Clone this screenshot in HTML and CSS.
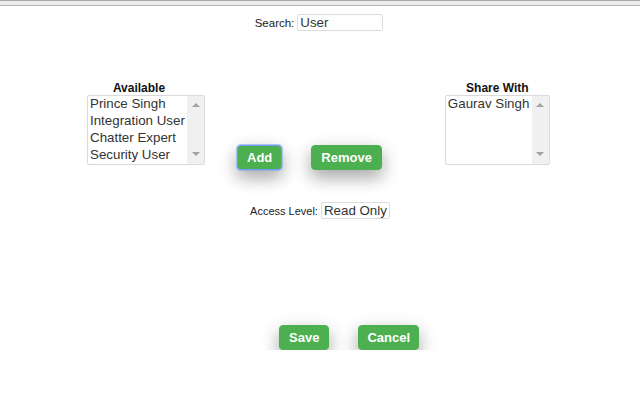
FILE: index.html
```html
<!DOCTYPE html>
<html>
<head>
<meta charset="utf-8">
<link rel="stylesheet" href="styles.css">
</head>
<body>
<div class="topbar"></div>

<div class="search-row">
  <span class="label">Search:</span>
  <div class="field search-field">User</div>
</div>

<div class="share-row">
  <div class="col col-available">
    <div class="col-title">Available</div>
    <div class="listbox">
      <div class="items">
        <div class="item">Prince Singh</div>
        <div class="item">Integration User</div>
        <div class="item">Chatter Expert</div>
        <div class="item">Security User</div>
      </div>
      <div class="scrollbar"><span class="arrow-up"></span><span class="arrow-down"></span></div>
    </div>
  </div>

  <div class="actions">
    <button class="btn btn-focus">Add</button>
    <button class="btn">Remove</button>
  </div>

  <div class="col col-share">
    <div class="col-title">Share With</div>
    <div class="listbox">
      <div class="items">
        <div class="item">Gaurav Singh</div>
      </div>
      <div class="scrollbar"><span class="arrow-up"></span><span class="arrow-down"></span></div>
    </div>
  </div>
</div>

<div class="access-row">
  <span class="label">Access Level:</span>
  <div class="field access-field">Read Only</div>
</div>

<div class="footer-actions">
  <button class="btn">Save</button>
  <button class="btn btn-cancel">Cancel</button>
</div>
</body>
</html>
```

FILE: styles.css
```css
* { box-sizing: border-box; }

body {
  margin: 0;
  background: #fff;
  font-family: "Liberation Sans", Arial, sans-serif;
  color: #222;
}

.topbar {
  height: 6px;
  border-top: 1px solid #a8a8a8;
  border-bottom: 1px solid #b4b4b4;
  background: #ededed;
}

.search-row,
.access-row {
  display: flex;
  justify-content: center;
  align-items: center;
  gap: 3px;
}

.search-row { margin-top: 8px; padding-right: 2px; }

.label {
  font-size: 11px;
  color: #222;
}

.search-row .label { font-size: 11.5px; }

.field {
  height: 17px;
  border: 1px solid #dcdcdc;
  border-radius: 2px;
  font-size: 13.33px;
  line-height: 15px;
  padding: 0 2px;
  color: #333;
  text-align: left;
}

.search-field { width: 86px; }
.access-field { width: 69px; }

.share-row {
  display: flex;
  align-items: flex-start;
  margin-top: 51px;
  padding-left: 87px;
}

.col-title {
  font-size: 12px;
  font-weight: bold;
  line-height: 13px;
  text-align: center;
  color: #111;
}

.col-available { width: 118px; }
.col-available .col-title { padding-right: 14px; }

.col-share { width: 105px; margin-left: 63px; }

.listbox {
  display: flex;
  height: 70px;
  border: 1px solid #dadada;
  border-radius: 2px;
  overflow: hidden;
}

.items {
  flex: 1;
  padding-left: 2px;
  margin-top: -1px;
}

.item {
  font-size: 13.33px;
  line-height: 17px;
  color: #333;
  white-space: nowrap;
}

.scrollbar {
  width: 17px;
  background: #f0f0f0;
  display: flex;
  flex-direction: column;
  justify-content: space-between;
  align-items: center;
  padding: 7px 0 8px;
}

.arrow-up,
.arrow-down {
  width: 0;
  height: 0;
  border-left: 4px solid transparent;
  border-right: 4px solid transparent;
}

.arrow-up { border-bottom: 4px solid #a3a3a3; }
.arrow-down { border-top: 4px solid #a3a3a3; }

.actions {
  display: flex;
  gap: 29px;
  margin-left: 32px;
  margin-top: 63px;
}

.btn {
  height: 25px;
  padding: 0 9px;
  border: 1px solid #4caf50;
  border-radius: 4px;
  background: #4caf50;
  color: #fff;
  font-family: "Liberation Sans", Arial, sans-serif;
  font-size: 13px;
  font-weight: bold;
  line-height: 23px;
  box-shadow: 0 8px 16px 0 rgba(0, 0, 0, 0.2), 0 6px 20px 0 rgba(0, 0, 0, 0.19);
  cursor: pointer;
}

.btn-focus {
  border-color: #6f9cf0;
  box-shadow: 0 0 0 1px rgba(130, 170, 240, 0.6), 0 8px 16px 0 rgba(0, 0, 0, 0.2), 0 6px 20px 0 rgba(0, 0, 0, 0.19);
}

.btn-cancel { padding: 0 8px; }

.access-row { margin-top: 32px; }

.footer-actions {
  display: flex;
  gap: 29px;
  margin-top: 106px;
  padding-left: 279px;
}
```
